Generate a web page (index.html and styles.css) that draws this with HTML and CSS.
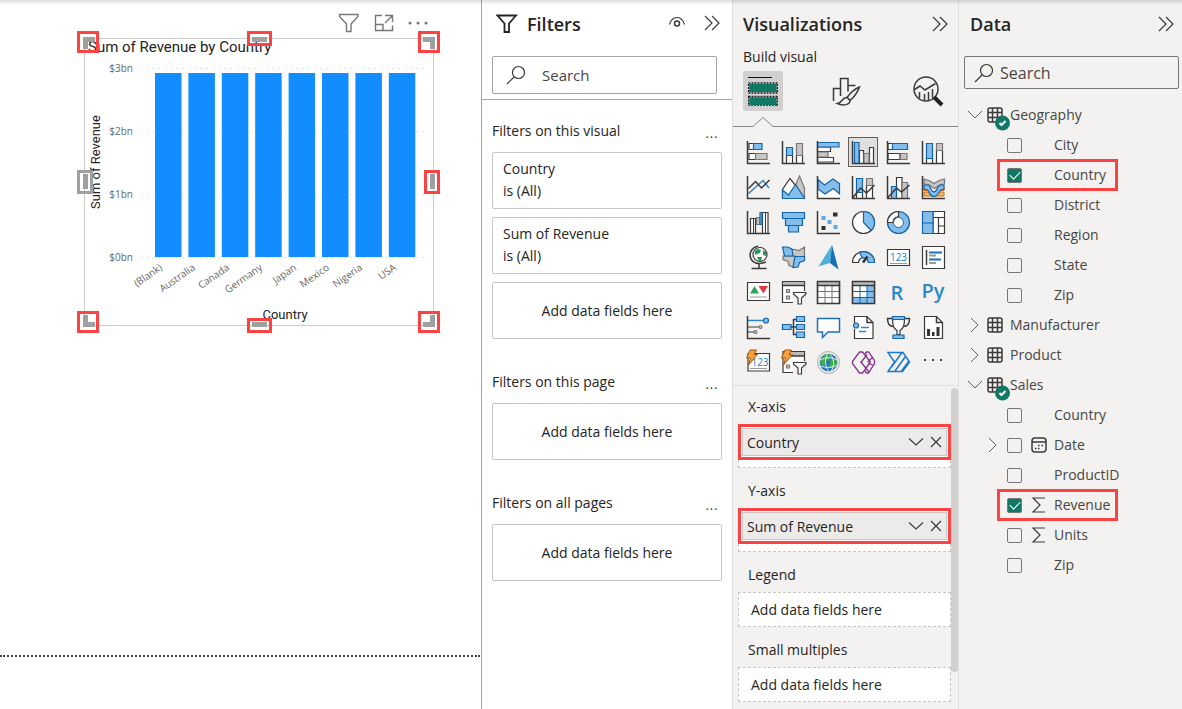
FILE: index.html
```html
<!DOCTYPE html>
<html lang="en">
<head>
    <meta charset="utf-8">
    <title>Report editor</title>
    <link rel="stylesheet" href="styles.css">
</head>
<body>
<main class="canvas">
    <div class="visual-toolbar">
        <button class="icon-btn" aria-label="Filters"><svg width="22" height="20" viewBox="0 0 22 20"><path d="M1.500 1.500h18.500v2l-7 7.500v7.500h-4.500v-7.500l-7-7.500z" class="tool"/></svg></button>
        <button class="icon-btn" aria-label="Focus mode"><svg width="20" height="18" viewBox="0 0 20 18"><path d="M8 1.500H1.500v15h17v-5M1.500 10.500H9v6M11 1.500h7.500V8M18 2l-7 7" class="tool"/></svg></button>
        <button class="icon-btn" aria-label="More options"><svg width="20" height="6" viewBox="0 0 20 6"><g fill="#777"><circle cx="2" cy="3" r="1.500"/><circle cx="10" cy="3" r="1.500"/><circle cx="18" cy="3" r="1.500"/></g></svg></button>
    </div>
    <div class="visual">
        <svg class="chart" width="348" height="286" viewBox="1 1 348 286" role="img" aria-label="Sum of Revenue by Country">
            <text x="4" y="14" class="chart-title">Sum of Revenue by Country</text>
            <g class="gridlines">
                <path d="M57 30.500H345M57 93.500H345M57 156.500H345M57 219.500H345"/>
            </g>
            <g class="tick">
                <text x="49" y="34" text-anchor="end">$3bn</text>
                <text x="49" y="97" text-anchor="end">$2bn</text>
                <text x="49" y="160" text-anchor="end">$1bn</text>
                <text x="49" y="223" text-anchor="end">$0bn</text>
            </g>
            <g fill="#118dff">
                <rect x="71" y="35" width="26.500" height="184"/>
                <rect x="104.400" y="35" width="26.500" height="184"/>
                <rect x="137.800" y="35" width="26.500" height="184"/>
                <rect x="171.200" y="35" width="26.500" height="184"/>
                <rect x="204.600" y="35" width="26.500" height="184"/>
                <rect x="238" y="35" width="26.500" height="184"/>
                <rect x="271.400" y="35" width="26.500" height="184"/>
                <rect x="304.800" y="35" width="26.500" height="184"/>
            </g>
            <g class="tick" text-anchor="end">
                <text transform="translate(79 231) rotate(-35)">(Blank)</text>
                <text transform="translate(112 231) rotate(-35)">Australia</text>
                <text transform="translate(146 231) rotate(-35)">Canada</text>
                <text transform="translate(179 231) rotate(-35)">Germany</text>
                <text transform="translate(213 231) rotate(-35)">Japan</text>
                <text transform="translate(246 231) rotate(-35)">Mexico</text>
                <text transform="translate(279 231) rotate(-35)">Nigeria</text>
                <text transform="translate(313 231) rotate(-35)">USA</text>
            </g>
            <text class="axis-title" text-anchor="middle" transform="translate(16 124) rotate(-90)">Sum of Revenue</text>
            <text class="axis-title" text-anchor="middle" x="201" y="281">Country</text>
        </svg>
        <svg class="handles" width="350" height="288" viewBox="0 0 350 288" aria-hidden="true">
            <g class="grip">
                <path d="M1.500 11V1.500H11"/>
                <path d="M339 1.500h9.500V11"/>
                <path d="M1.500 277v9.500H11"/>
                <path d="M339 286.500h9.500V277"/>
                <path d="M168 1.500h15M168 286.500h15M1.500 136v15M348.500 136v15"/>
            </g>
            <g class="mark">
                <rect x="-5.500" y="-5.500" width="19" height="19"/>
                <rect x="335.500" y="-5.500" width="19" height="19"/>
                <rect x="-5.500" y="274.500" width="19" height="19"/>
                <rect x="335.500" y="274.500" width="19" height="19"/>
                <rect x="164.500" y="-5.500" width="22" height="12"/>
                <rect x="164.500" y="281.500" width="22" height="12"/>
                <rect x="341.500" y="133.500" width="13" height="21"/>
                <rect x="-5.500" y="133.500" width="13" height="21" class="off"/>
            </g>
        </svg>
    </div>
    <div class="page-edge"></div>
</main>

<aside class="filters">
    <div class="pane-head">
        <svg width="22" height="20" viewBox="0 0 22 20"><path d="M1.500 1.500h18.500l-7 8v8.500h-4.500V9.500z" fill="none" stroke="#252423" stroke-width="1.800"/></svg>
        <h2>Filters</h2>
        <button class="icon-btn eye" aria-label="Show or hide"><svg width="18" height="16" viewBox="0 0 18 16"><path d="M1.500 8.500C3 3.500 6 1.500 9 1.500s6 2 7.500 7" class="line"/><circle cx="9" cy="7.500" r="2.500" class="line bold"/></svg></button>
        <button class="icon-btn" aria-label="Collapse"><svg width="16" height="18" viewBox="0 0 16 18"><path d="M1 1l7 7-7 7M8 1l7 7-7 7" class="line"/></svg></button>
    </div>
    <label class="search search-filters">
        <svg width="20" height="20" viewBox="0 0 20 20"><circle cx="12.500" cy="7.500" r="6" class="line"/><path d="M8 12l-7 7" class="line"/></svg>
        <input type="text" placeholder="Search" aria-label="Search filters">
    </label>
    <div class="filter-list">
        <section>
            <div class="filter-label"><h3>Filters on this visual</h3><button aria-label="More">…</button></div>
            <div class="card"><span>Country</span><span>is (All)</span></div>
            <div class="card"><span>Sum of Revenue</span><span>is (All)</span></div>
            <div class="card empty">Add data fields here</div>
        </section>
        <section>
            <div class="filter-label"><h3>Filters on this page</h3><button aria-label="More">…</button></div>
            <div class="card empty">Add data fields here</div>
        </section>
        <section>
            <div class="filter-label"><h3>Filters on all pages</h3><button aria-label="More">…</button></div>
            <div class="card empty">Add data fields here</div>
        </section>
    </div>
</aside>

<aside class="viz">
    <div class="pane-head">
        <h2>Visualizations</h2>
        <button class="icon-btn" aria-label="Collapse"><svg width="16" height="16" viewBox="0 0 16 16"><path d="M1 1l7 7-7 7M8 1l7 7-7 7" class="line"/></svg></button>
    </div>
    <h3 class="build">Build visual</h3>
    <div class="tabs">
        <button class="tab active" aria-label="Build visual"><svg width="30" height="30" viewBox="0 0 30 30"><path d="M0 1.500h24" stroke="#111"/><path d="M1 7.500h28v9H1zM1 21h28v9H1z" fill="#117865"/><g fill="none" stroke="#f3f2f1" stroke-width="1.500"><path d="M.5 7h29v10H.5zM.5 20.500h29v9.500H.5z"/></g><g fill="none" stroke="#111" stroke-width="1.500" stroke-dasharray="2 1"><path d="M.5 7h29v10H.5zM.5 20.500h29v9.500H.5z"/></g></svg></button>
        <button class="tab" aria-label="Format visual"><svg width="30" height="30" viewBox="0 0 30 30"><g class="line bold"><path d="M2.500 25V12.500h7M9.500 20V2.500h7.500v13M17 9.500h7.500"/><path d="M28.500 11c-6 2.500-10 7-12.500 10.500l3 3c4-3.500 7.500-8 9.500-13.500z" fill="#f3f2f1"/><path d="M16 21.500c-5-.5-4.500 5.500-9.500 6 5 2.500 12.500 1.500 12.500-3z" fill="#f3f2f1"/></g></svg></button>
        <button class="tab" aria-label="Analytics"><svg width="32" height="32" viewBox="0 0 32 32"><g class="line bold"><circle cx="14" cy="14" r="12"/><path d="M2.500 14.500L8 11l5 4 10.500-6.500M7.500 17v6M12.500 19v7M16.500 17v9M20.500 14v9"/></g><path d="M22 22l8 8" stroke="#222" stroke-width="4"/></svg></button>
        <svg class="caret" width="20" height="11" viewBox="0 0 20 11"><path d="M0 9.500L10 .5l10 9V11H0z" fill="#f3f2f1"/><path d="M0 9.500L10 .5l10 9" fill="none" stroke="#8a8886"/></svg>
    </div>
    <div class="gallery">
        <button aria-label="Stacked bar chart"><svg viewBox="0 0 24 24"><path d="M3 3.500h5v6H3zM3 13.500h7v6H3z" class="w"/><path d="M7.500 3.500h8.500v6H7.500z" class="b"/><path d="M9.500 13.500H21v6H9.500z" class="g"/><path d="M1.500 1v22.500H24" class="k"/></svg></button>
        <button aria-label="Stacked column chart"><svg viewBox="0 0 24 24"><path d="M5.500 15.500h6v8h-6zM15.500 15.500h6v8h-6z" class="w"/><path d="M5.500 7.500h6v8h-6z" class="b"/><path d="M15.500 3.500h6v12h-6z" class="g"/><path d="M1.500 1v22.500H24" class="k"/></svg></button>
        <button aria-label="Clustered bar chart"><svg viewBox="0 0 24 24"><path d="M1.500 7h13v4.500h-13zM1.500 17.500h16V22h-16z" class="w"/><path d="M1.500 12h10.500v5H1.500z" class="g"/><path d="M1.500 2.500h21.500v4.500H1.500z" class="b"/><path d="M1.500 1v22.500H24" class="k"/></svg></button>
        <button class="selected" aria-label="Clustered column chart"><svg viewBox="0 0 24 24"><path d="M8.500 10.500h4v13h-4zM18.500 7.500h4v16h-4z" class="w"/><path d="M13 13.500h5v10h-5z" class="g"/><path d="M3.500 2.500h4.500v21H3.500z" class="b"/><path d="M1.500 1v22.500H24" class="k"/></svg></button>
        <button aria-label="100% stacked bar chart"><svg viewBox="0 0 24 24"><path d="M2 3.500h5v6H2zM2 13.500h12v6H2z" class="w"/><path d="M6.500 3.500h15v6h-15z" class="b"/><path d="M14.500 13.500H21v6h-6.500z" class="g"/><path d="M1.500 1v22.500H24" class="k"/></svg></button>
        <button aria-label="100% stacked column chart"><svg viewBox="0 0 24 24"><path d="M5.500 18.500h6v5h-6zM15.500 10.500h6v13h-6z" class="w"/><path d="M5.500 3.500h6v15h-6z" class="b"/><path d="M15.500 3.500h6v7h-6z" class="g"/><path d="M1.500 1v22.500H24" class="k"/></svg></button>

        <button aria-label="Line chart"><svg viewBox="0 0 24 24"><path d="M2.500 18.500L17 5.500l6 7.500" class="bl"/><path d="M2.500 13.500l7-7 6 6.500L23.500 5" class="k"/><path d="M1.500 1v22.500H24" class="k"/></svg></button>
        <button aria-label="Area chart"><svg viewBox="0 0 24 24"><path d="M12 16L18.500 1l5 12v10.500z" class="g"/><path d="M1.500 23V14.500L9 3.500l6.500 8L20 23z" class="w"/><path d="M1.500 15l6 5 7-10.500 9 13.500v.5h-22z" class="b"/></svg></button>
        <button aria-label="Stacked area chart"><svg viewBox="0 0 24 24"><path d="M1.500 14l7.500 5 8.500-6 6.500 6v4.500H1.500z" fill="#fff"/><path d="M2 4.500l6.500 5.500 8.500-6 6.500 4.500V19l-6-5.500L9 19l-7-5z" class="b"/><path d="M1.500 1v22.500H24" class="k"/></svg></button>
        <button aria-label="Line and stacked column chart"><svg viewBox="0 0 24 24"><path d="M5.500 17.500h6v6h-6zM15.500 10.500h6v13h-6z" class="w"/><path d="M5.500 3.500h6v14h-6z" class="b"/><path d="M15.500 3.500h6v7h-6z" class="g"/><path d="M2 22.500l7.500-9.500 6 5 8-8M1.500 1v22.500H24" class="k"/></svg></button>
        <button aria-label="Line and clustered column chart"><svg viewBox="0 0 24 24"><path d="M10.500 2.500h5.500v21h-5.500z" class="w"/><path d="M5.500 11.500h5v12h-5z" class="b"/><path d="M16 7.500h5.500v16H16z" class="g"/><path d="M2 22.500l8.500-9.500 5 4 8-7M1.500 1v22.500H24" class="k"/></svg></button>
        <button aria-label="Ribbon chart"><svg viewBox="0 0 24 24"><path d="M3 4l5 1.500 5 3 5-3L23.500 4v5l-4 .5-6 4-6-4L3 9z" class="g"/><path d="M3 12.500h6v3H3zM17 12.500h6v3h-6zM3 17h20v4H3z" fill="#f9b26b" stroke="#d9730f"/><path d="M3 10h4.500c2 0 2 7 5.500 7s3.500-7 6-7h4v4.500h-2.500c-2 0-2.500 7-7.500 7s-5-7-7.500-7H3z" class="b"/><path d="M1.500 1v22.500H24" class="k"/></svg></button>

        <button aria-label="Waterfall chart"><svg viewBox="0 0 24 24"><path d="M4.500 8.500h5v15h-5zM16.500 2.500h5.500v21h-5.500z" class="w"/><path d="M7.500 9v14M19.500 3v20" class="k thin"/><path d="M10.500 7.500H14v7h-3.500z" class="g"/><path d="M14 2.500h2v12h-2z" class="b"/><path d="M1.500 1v22.500H24" class="k"/></svg></button>
        <button aria-label="Funnel"><svg viewBox="0 0 24 24"><path d="M1.500 2.500h22v6h-22zM4.500 8.500h17v7h-17zM7.500 15.500h10v6.500h-10z" class="b"/></svg></button>
        <button aria-label="Scatter chart"><svg viewBox="0 0 24 24"><path d="M17 2.500h4.500v4H17zM5.500 16h4v4h-4z" fill="#333"/><path d="M5.500 6h4v4h-4zM11.500 10h4v4h-4zM17.500 15h4v4h-4z" fill="#62a8e0"/><path d="M1.500 1v22.500H24" class="k"/></svg></button>
        <button aria-label="Pie chart"><svg viewBox="0 0 24 24"><circle cx="12.500" cy="12.500" r="11" class="w"/><path d="M12.500 1.500a11 11 0 0 1 7.500 19l-7.500-8z" class="b"/></svg></button>
        <button aria-label="Donut chart"><svg viewBox="0 0 24 24"><circle cx="12.500" cy="12.500" r="11" class="b"/><path d="M12.500 1.500a11 11 0 0 0-11 11h5.500a5 5 0 0 1 5.500-5.500z" class="w"/><circle cx="12.500" cy="12.500" r="5" fill="#fff" stroke="#1464a8"/></svg></button>
        <button aria-label="Treemap"><svg viewBox="0 0 24 24"><path d="M12 1.500h11.500v6H12zM12 7.500h5.500v16H12zM17.500 7.500h6V16h-6zM17.500 16h6v7.500h-6z" class="w"/><path d="M1.500 1.500H12V13H1.500zM1.500 13H12v10.500H1.500z" class="b"/></svg></button>

        <button aria-label="Map"><svg viewBox="0 0 24 24"><circle cx="14" cy="9.500" r="7" class="w"/><path d="M9 6l3-2 3 1-1 3-3 1-2 1zM17 5l3 2v4l-3-1zM11 12h5l-1 4h-2z" fill="#1f9c4c"/><path d="M12 1C6 2.500 3 7 4.500 12.500S12 20 20 17M13 19v4M5.500 23.500h15" class="k"/></svg></button>
        <button aria-label="Filled map"><svg viewBox="0 0 24 24"><path d="M10 4.500h4l4 1 5.500-3.500v10H11z" class="g"/><path d="M2 11h12l-1 11.500-5-2-1-4-5-2z" class="g"/><path d="M1.500 2h5l4.500 2 1 7H3.500z" class="b"/><path d="M14 11.500h9.500v4l-5 2-1.500 4.500-5 .5 1-6z" class="b"/></svg></button>
        <button aria-label="Azure map"><svg viewBox="0 0 24 24"><path d="M16 0L2.500 21.500 14 18z" fill="#50b0dc"/><path d="M16 0l-2 18 8.500 6.500z" fill="#1470b8"/></svg></button>
        <button aria-label="Gauge"><svg viewBox="0 0 24 24"><path d="M1.500 17.500a11 11 0 0 1 22 0h-6a5 5 0 0 0-10 0z" class="w"/><path d="M8.500 7.500a11 11 0 0 1 15 10h-6a5 5 0 0 0-6-4.500z" class="b"/><path d="M12 17.500l4.500-6" stroke="#333" stroke-width="2.500"/></svg></button>
        <button aria-label="Card"><svg viewBox="0 0 24 24"><path d="M1.500 4.500h22v16h-22z" class="w"/><path d="M4 18.500h17" stroke="#999"/><text x="12.500" y="16" class="num">123</text></svg></button>
        <button aria-label="Multi-row card"><svg viewBox="0 0 24 24"><path d="M1.500 1.500h22v22h-22z" class="w"/><path d="M5.500 5v15" class="k"/><path d="M8 7.500h13M8 14.500h12" stroke="#1f6fb8" stroke-width="2"/><path d="M8 10.500h7M8 18h7" stroke="#999" stroke-width="2"/></svg></button>

        <button aria-label="KPI"><svg viewBox="0 0 24 24"><path d="M1.500 2.500h22v18h-22z" class="w"/><path d="M4 13.500L8.500 6l4.500 7.500z" fill="#2fa35b"/><path d="M12.500 6H22l-4.500 7.500z" fill="#e03a3e"/><path d="M4 17h17" stroke="#999"/></svg></button>
        <button aria-label="Slicer"><svg viewBox="0 0 24 24"><path d="M1.500 1.500h22v21h-22z" class="w"/><path d="M2 2h21v3.500H2z" fill="#bbb"/><path d="M1.500 5.500h22" class="k"/><path d="M5.500 9.500h3v3h-3zM5.500 16h3v3h-3z" class="g"/><path d="M12 11v13h12V11z" fill="#f3f2f1"/><path d="M12.500 12.500H25v1.500l-4.500 4v6h-3.500v-6l-4.500-4z" class="w"/></svg></button>
        <button aria-label="Table"><svg viewBox="0 0 24 24"><path d="M1.500 1.500h22v22h-22z" class="w"/><path d="M2 2h21v3.500H2z" fill="#bbb"/><path d="M9 6v17M16 6v17M2 11.500h21M2 17.500h21" stroke="#777"/><path d="M1.500 1.500h22v22h-22zM1.500 5.500h22" class="k"/></svg></button>
        <button aria-label="Matrix"><svg viewBox="0 0 24 24"><path d="M1.500 1.500h22v22h-22z" class="w"/><path d="M2 2h21v3.500H2z" fill="#bbb"/><path d="M16 6h7v17H2v-5.500h14z" fill="#83bdec"/><path d="M9 6v17M16 6v17M2 11.500h21M2 17.500h21" stroke="#1464a8"/><path d="M1.500 1.500h22v22h-22zM1.500 5.500h22" class="k"/></svg></button>
        <button aria-label="R script visual"><svg viewBox="0 0 24 24"><text x="11" y="20" class="lang">R</text></svg></button>
        <button aria-label="Python visual"><svg viewBox="0 0 24 24"><text x="12" y="18" class="lang">Py</text></svg></button>

        <button aria-label="Key influencers"><svg viewBox="0 0 24 24"><path d="M2 5.500h15" class="bl"/><circle cx="20" cy="5.500" r="2.500" class="b"/><path d="M2 12h11M2 17h6" stroke="#777" stroke-width="1.500"/><circle cx="14.500" cy="12" r="1.500" class="g"/><circle cx="9.500" cy="17" r="1.500" class="g"/><path d="M1.500 1v22.500H24" class="k"/></svg></button>
        <button aria-label="Decomposition tree"><svg viewBox="0 0 24 24"><path d="M10 12h5M16 4.500h-3.500v15H16" class="k"/><path d="M1.500 9.500H10v5H1.500zM15.500 1.500h8v5h-8zM15.500 9.500h8v5h-8zM15.500 17h8v5.500h-8z" class="b"/></svg></button>
        <button aria-label="Q&amp;A"><svg viewBox="0 0 24 24"><path d="M1.500 3.500h22v13.500H12l-5.500 5.500V17h-5z" fill="#fff" stroke="#1f6fb8" stroke-width="1.500"/></svg></button>
        <button aria-label="Narrative"><svg viewBox="0 0 24 24"><path d="M3.500 8V1.500H16l6 6v16H3.500V14" class="w"/><path d="M16 1.500v6h6" class="k"/><path d="M10 12.500h8M8 16.500h7" class="bl"/><circle cx="5" cy="10.500" r="2.500" class="b"/></svg></button>
        <button aria-label="Goals"><svg viewBox="0 0 24 24"><path d="M6.500 3.500h-5c0 5 2 8 6 8M18.500 3.500h5c0 5-2 8-6 8" class="k"/><path d="M6.500 2.500h12c0 8-1 11-4.500 13v4h-3v-4c-3.500-2-4.500-5-4.500-13z" class="w"/><path d="M6.500 1.500h12v3h-12zM7 20h11v3.500H7z" class="b"/></svg></button>
        <button aria-label="Paginated report"><svg viewBox="0 0 24 24"><path d="M3.500 1.500h12l6 6v16h-18z" class="w"/><path d="M15.500 1.500v6h6" class="k"/><path d="M6 14h3v7H6zM11 17h2.500v4H11zM15.500 12h3v9h-3z" fill="#333"/></svg></button>

        <button aria-label="Card (new)"><svg viewBox="0 0 24 24"><path d="M2 3.500h21.500v17.500H2z" class="w"/><path d="M4 18.500h17" stroke="#999"/><text x="14" y="16" class="num">123</text><path d="M4 0h6.500L8 4.500h3.500L2.500 15l2-7H.5z" class="bolt"/></svg></button>
        <button aria-label="Slicer (new)"><svg viewBox="0 0 24 24"><path d="M2 1.500h21.500v21H2z" class="w"/><path d="M8 2h15v4H8z" fill="#bbb"/><path d="M8 6h15.500" class="k"/><path d="M5.500 15h3v3h-3z" class="g"/><path d="M12 11v13h12V11z" fill="#f3f2f1"/><path d="M12.500 12.500H25v1.500l-4.500 4v6h-3.500v-6l-4.500-4z" class="w"/><path d="M4 0h6.500L8 4.500h3.500L2.500 15l2-7H.5z" class="bolt"/></svg></button>
        <button aria-label="ArcGIS map"><svg viewBox="0 0 24 24"><circle cx="12.500" cy="12.500" r="11" fill="#eee" stroke="#aaa"/><circle cx="12.500" cy="12.500" r="9" fill="#2a7ab9"/><path d="M5 8l5-4 5 1-1 4-5 3-1 5-4-4zM15 10l5-2 1 6-4 5-4-2z" fill="#3fae49"/><path d="M4 10c6-3 12-3 17 0M4 16c6 2 12 2 17-1M12 3.500c-4 6-3 13 1 18M14 3.500c4 5 5 12 1 18" fill="none" stroke="#fff" stroke-width=".8"/></svg></button>
        <button aria-label="Power Apps"><svg viewBox="0 0 24 24"><g fill="none" stroke="#86338f" stroke-width="1.300"><path d="M8.500 2h3l8 10-8 11h-3l-7-9.500v-2z"/><path d="M13.500 4.500L15.500 2h2l6 8.500v3L17.500 23h-2l-2-2.500M10 12.500l6-8M9.500 11.500L18 22M16.500 12L22 7M17 13l5.500 2.500"/></g></svg></button>
        <button aria-label="Power Automate"><svg viewBox="0 0 24 24"><path d="M2 2.500h15l6.500 9.500-7 9.500H2L8.500 12zM9 21L19.500 6.500M15.500 21L23 11M5.500 17L16 2.500" fill="none" stroke="#1b78d0" stroke-width="1.500"/></svg></button>
        <button aria-label="Get more visuals"><svg viewBox="0 0 24 24"><circle cx="4" cy="10" r="1"/><circle cx="12" cy="10" r="1"/><circle cx="20" cy="10" r="1"/></svg></button>
    </div>
    <div class="wells">
        <div class="well-list">
            <h4>X-axis</h4>
            <div class="well filled">
                <div class="chip"><span>Country</span>
                    <button aria-label="Field options"><svg width="16" height="8" viewBox="0 0 16 8"><path d="M1 .5l7 6.500 7-6.500" class="line"/></svg></button>
                    <button aria-label="Remove field"><svg width="12" height="12" viewBox="0 0 12 12"><path d="M1 1l10 10M11 1L1 11" class="line"/></svg></button>
                </div>
            </div>
            <h4>Y-axis</h4>
            <div class="well filled">
                <div class="chip"><span>Sum of Revenue</span>
                    <button aria-label="Field options"><svg width="16" height="8" viewBox="0 0 16 8"><path d="M1 .5l7 6.500 7-6.500" class="line"/></svg></button>
                    <button aria-label="Remove field"><svg width="12" height="12" viewBox="0 0 12 12"><path d="M1 1l10 10M11 1L1 11" class="line"/></svg></button>
                </div>
            </div>
            <h4>Legend</h4>
            <div class="well">Add data fields here</div>
            <h4>Small multiples</h4>
            <div class="well">Add data fields here</div>
        </div>
        <div class="scrollbar"></div>
    </div>
</aside>

<aside class="data">
    <div class="pane-head">
        <h2>Data</h2>
        <button class="icon-btn" aria-label="Collapse"><svg width="16" height="16" viewBox="0 0 16 16"><path d="M1 1l7 7-7 7M8 1l7 7-7 7" class="line"/></svg></button>
    </div>
    <label class="search search-data">
        <svg width="20" height="20" viewBox="0 0 20 20"><circle cx="12.500" cy="7.500" r="6" class="line"/><path d="M8 12l-7 7" class="line"/></svg>
        <input type="text" placeholder="Search" aria-label="Search data">
    </label>
    <ul class="tree">
        <li class="table">
            <svg class="chev" viewBox="0 0 16 16"><path d="M1 4l7 7 7-7" class="line"/></svg>
            <svg class="grid" viewBox="0 0 24 24"><g class="line bold"><rect x="1" y="1" width="14" height="14" rx="2"/><path d="M5.500 1v14M10.500 1v14M1 5.500h14M1 10.500h14"/></g><circle cx="15.500" cy="16" r="7.500" fill="#117865"/><path d="M12.500 16l2 2 4-4" fill="none" stroke="#fff" stroke-width="2"/></svg>
            <span>Geography</span>
        </li>
        <li><label><input type="checkbox"><i></i>City</label></li>
        <li class="picked"><label><input type="checkbox" checked><i></i>Country</label></li>
        <li><label><input type="checkbox"><i></i>District</label></li>
        <li><label><input type="checkbox"><i></i>Region</label></li>
        <li><label><input type="checkbox"><i></i>State</label></li>
        <li><label><input type="checkbox"><i></i>Zip</label></li>
        <li class="table">
            <svg class="chev" viewBox="0 0 16 16"><path d="M4 1l7 7-7 7" class="line"/></svg>
            <svg class="grid" viewBox="0 0 24 24"><g class="line bold"><rect x="1" y="1" width="14" height="14" rx="2"/><path d="M5.500 1v14M10.500 1v14M1 5.500h14M1 10.500h14"/></g></svg>
            <span>Manufacturer</span>
        </li>
        <li class="table">
            <svg class="chev" viewBox="0 0 16 16"><path d="M4 1l7 7-7 7" class="line"/></svg>
            <svg class="grid" viewBox="0 0 24 24"><g class="line bold"><rect x="1" y="1" width="14" height="14" rx="2"/><path d="M5.500 1v14M10.500 1v14M1 5.500h14M1 10.500h14"/></g></svg>
            <span>Product</span>
        </li>
        <li class="table">
            <svg class="chev" viewBox="0 0 16 16"><path d="M1 4l7 7 7-7" class="line"/></svg>
            <svg class="grid" viewBox="0 0 24 24"><g class="line bold"><rect x="1" y="1" width="14" height="14" rx="2"/><path d="M5.500 1v14M10.500 1v14M1 5.500h14M1 10.500h14"/></g><circle cx="15.500" cy="16" r="7.500" fill="#117865"/><path d="M12.500 16l2 2 4-4" fill="none" stroke="#fff" stroke-width="2"/></svg>
            <span>Sales</span>
        </li>
        <li><label><input type="checkbox"><i></i>Country</label></li>
        <li class="nested">
            <svg class="chev" viewBox="0 0 16 16"><path d="M4 1l7 7-7 7" class="line"/></svg>
            <label><input type="checkbox"><i><svg width="16" height="16" viewBox="0 0 16 16"><g class="line bold"><rect x="1" y="1" width="14" height="14" rx="3"/><path d="M1 5h14"/></g><path d="M7 8.500h1.500M10.500 8.500H12M4 11.500h1.500M7 11.500h1.500" stroke="#333" stroke-width="1.500"/></svg></i>Date</label>
        </li>
        <li><label><input type="checkbox"><i></i>ProductID</label></li>
        <li class="picked"><label><input type="checkbox" checked><i><svg width="16" height="16" viewBox="0 0 16 16"><path d="M14 1H2l7 7-7 7h12" class="line"/></svg></i>Revenue</label></li>
        <li><label><input type="checkbox"><i><svg width="16" height="16" viewBox="0 0 16 16"><path d="M14 1H2l7 7-7 7h12" class="line"/></svg></i>Units</label></li>
        <li><label><input type="checkbox"><i></i>Zip</label></li>
    </ul>
</aside>
</body>
</html>
```
FILE: styles.css
```css
* {
    box-sizing: border-box;
}
body {
    margin: 0;
    display: flex;
    min-height: 100vh;
    font-family: "Open Sans", "Noto Sans", sans-serif;
    font-size: 14px;
    line-height: 22px;
    color: #252423;
    background: #fff;
}
/* shadow of the ribbon above */
body::before {
    content: "";
    position: absolute;
    top: 0;
    left: 0;
    right: 0;
    height: 5px;
    background: linear-gradient(rgba(0, 0, 0, 0.13), rgba(0, 0, 0, 0));
}
h2, h3, h4, ul {
    margin: 0;
    padding: 0;
    font-weight: normal;
    font-size: 14px;
}
button {
    margin: 0;
    padding: 0;
    border: 0;
    background: none;
    color: inherit;
    font: inherit;
}
svg {
    display: block;
    flex: none;
}
.line {
    fill: none;
    stroke: #3b3a39;
    stroke-width: 1.2;
}
.bold {
    stroke-width: 1.5;
}
.tool {
    fill: none;
    stroke: #777;
    stroke-width: 1.4;
}

/* report canvas */
.canvas {
    flex: 1;
    min-width: 0;
    display: flex;
    flex-direction: column;
    padding: 13px 1px 52px 0;
}
.visual-toolbar {
    display: flex;
    align-items: center;
    justify-content: flex-end;
    gap: 14px;
    width: 344px;
    height: 20px;
    margin: 0 0 5px 84px;
}
.visual {
    position: relative;
    width: 350px;
    margin-left: 84px;
    border: 1px solid #ccc;
}
.handles {
    position: absolute;
    top: -1px;
    left: -1px;
    overflow: visible;
}
.chart-title {
    font: 15px Roboto, sans-serif;
    fill: #252423;
}
.axis-title {
    font: 13px Roboto, sans-serif;
    fill: #252423;
}
.tick {
    font-size: 10px;
    fill: #666;
}
.gridlines {
    stroke: #d0d0d0;
    stroke-dasharray: 1 5;
}
.grip {
    fill: none;
    stroke: #a0a0a0;
    stroke-width: 5;
}
.mark {
    fill: none;
    stroke: #fb4343;
    stroke-width: 3;
}
.mark .off {
    stroke: #a0a0a0;
}
.page-edge {
    margin-top: auto;
    border-bottom: 2px dotted #444;
}

/* panes */
.pane-head {
    display: flex;
    align-items: center;
    height: 48px;
}
.pane-head h2 {
    flex: 1;
    font-size: 18px;
    font-weight: 600;
}
.search {
    display: flex;
    align-items: center;
    border: 1px solid #a6a4a2;
    border-radius: 2px;
}
.search input {
    flex: 1;
    min-width: 0;
    padding: 0;
    border: 0;
    outline: 0;
    background: none;
    font: inherit;
    font-size: 16px;
}
.search input::placeholder {
    color: #484644;
}
.filters {
    width: 251px;
    border-left: 1px solid #a6a4a2;
    background: #fff;
}
.filters .pane-head {
    gap: 9px;
    padding: 0 12px 0 14px;
}
.filters .eye {
    margin-right: 9px;
}
.search-filters {
    height: 38px;
    margin: 8px 15px 5px 10px;
    padding: 0 13px;
    gap: 16px;
}
.search-filters input {
    font-size: 15px;
}
.filter-list {
    display: flex;
    flex-direction: column;
    gap: 32px;
    padding: 20px 10px 0;
    border-top: 1px solid #a6a4a2;
}
.filter-list section {
    display: flex;
    flex-direction: column;
    gap: 8px;
}
.filter-label {
    display: flex;
    justify-content: space-between;
    padding: 0 4px 2px 0;
}
.filter-label button {
    font-size: 18px;
    font-weight: 300;
    line-height: 18px;
}
.card {
    display: flex;
    flex-direction: column;
    justify-content: center;
    height: 57px;
    padding: 0 10px 2px;
    border: 1px solid #c8c6c4;
    border-radius: 2px;
}
.empty {
    align-items: center;
    padding-bottom: 0;
}

/* visualizations */
.viz {
    width: 226px;
    border-left: 1px solid #e1dfdd;
    background: #f3f2f1;
}
.viz .pane-head {
    padding: 0 10px;
}
.build {
    height: 18px;
    margin-bottom: 5px;
    padding-left: 10px;
    font-weight: 500;
    line-height: 18px;
}
.tabs {
    position: relative;
    display: flex;
    justify-content: space-between;
    height: 56px;
    padding: 0 10px;
    border-bottom: 1px solid #8a8886;
}
.tab {
    display: flex;
    align-items: center;
    justify-content: center;
    width: 40px;
    height: 40px;
    border-radius: 2px;
}
.tab.active {
    background: #d2d0ce;
}
.caret {
    position: absolute;
    left: 20px;
    bottom: -2px;
}
.gallery {
    display: grid;
    grid-template-columns: repeat(6, 30px);
    grid-auto-rows: 30px;
    gap: 5px;
    padding: 10px;
    padding-bottom: 8px;
    border-bottom: 1px solid #e1dfdd;
}
.gallery button {
    display: flex;
    align-items: center;
    justify-content: center;
}
.gallery .selected {
    border: 1px solid #605e5c;
    background: #e1dfdd;
}
.gallery svg {
    width: 24px;
    height: 24px;
    overflow: visible;
}
.w {
    fill: #fff;
    stroke: #3b3a39;
    stroke-width: 1.2;
}
.b {
    fill: #83bdec;
    stroke: #1464a8;
    stroke-width: 1.2;
}
.g {
    fill: #c8c6c4;
    stroke: #797775;
    stroke-width: 1.2;
}
.k {
    fill: none;
    stroke: #3b3a39;
    stroke-width: 1.5;
}
.thin {
    stroke-width: 1;
}
.bl {
    fill: none;
    stroke: #2b88c8;
    stroke-width: 1.5;
}
.bolt {
    fill: #f9a13a;
    stroke: #a8560c;
}
.num {
    font-size: 10px;
    fill: #1f7fc8;
    text-anchor: middle;
}
.lang {
    font-size: 20px;
    font-weight: 600;
    fill: #2b88c8;
    text-anchor: middle;
}
.wells {
    display: flex;
    align-items: flex-start;
}
.well-list {
    flex: 1;
    padding-left: 5px;
}
.well-list h4 {
    padding: 9px 10px 5px;
    line-height: 24px;
}
.well {
    height: 35px;
    margin-bottom: 2px;
    padding: 0 12px;
    border: 1px dashed #c8c6c4;
    background: #fff;
    line-height: 33px;
}
.well.filled {
    height: 44px;
    padding: 0;
}
.chip {
    display: flex;
    align-items: center;
    gap: 6px;
    height: 36px;
    margin: -1px;
    padding: 0 6px;
    border: 3px solid #fb4343;
    background: #edebe9;
    box-shadow: inset 0 0 0 1px #fff, inset 0 0 0 2px #c8c6c4;
}
.chip span {
    flex: 1;
}
.scrollbar {
    width: 7px;
    height: 284px;
    margin-top: 2px;
    border-radius: 4px;
    background: #d2d0ce;
}

/* data */
.data {
    width: 224px;
    border-left: 1px solid #e1dfdd;
    background: #f3f2f1;
}
.data .pane-head {
    padding: 0 8px 0 11px;
}
.search-data {
    height: 33px;
    margin: 8px 3px 11px 5px;
    padding: 0 9px;
    gap: 6px;
    border-color: #797775;
}
.tree {
    list-style: none;
    color: #484644;
}
.tree li {
    display: flex;
    align-items: center;
    height: 30px;
    padding-left: 48px;
}
.tree .table {
    padding-left: 8px;
}
.tree .nested {
    padding-left: 26px;
}
.nested .chev {
    margin-right: 6px;
}
.chev {
    width: 16px;
    height: 16px;
}
.chev .line {
    stroke: #605e5c;
    stroke-width: 1;
}
.grid {
    width: 24px;
    height: 24px;
    margin: 8px -1px 0 4px;
}
.tree label {
    display: flex;
    align-items: center;
}
.tree input {
    appearance: none;
    width: 15px;
    height: 15px;
    margin: 0;
    border: 1px solid #797775;
    border-radius: 2px;
}
.tree input:checked {
    background: #117865;
}
.tree input:checked::after {
    content: "";
    display: block;
    width: 9px;
    height: 5px;
    margin: 2px;
    border: solid #fff;
    border-width: 0 0 1px 1px;
    transform: rotate(-45deg);
}
.tree label i {
    width: 16px;
    margin: 0 7px 0 9px;
}
.picked label {
    height: 32px;
    margin-left: -10px;
    padding: 0 5px 0 7px;
    width: 121px;
    border: 3px solid #fb4343;
}
```
